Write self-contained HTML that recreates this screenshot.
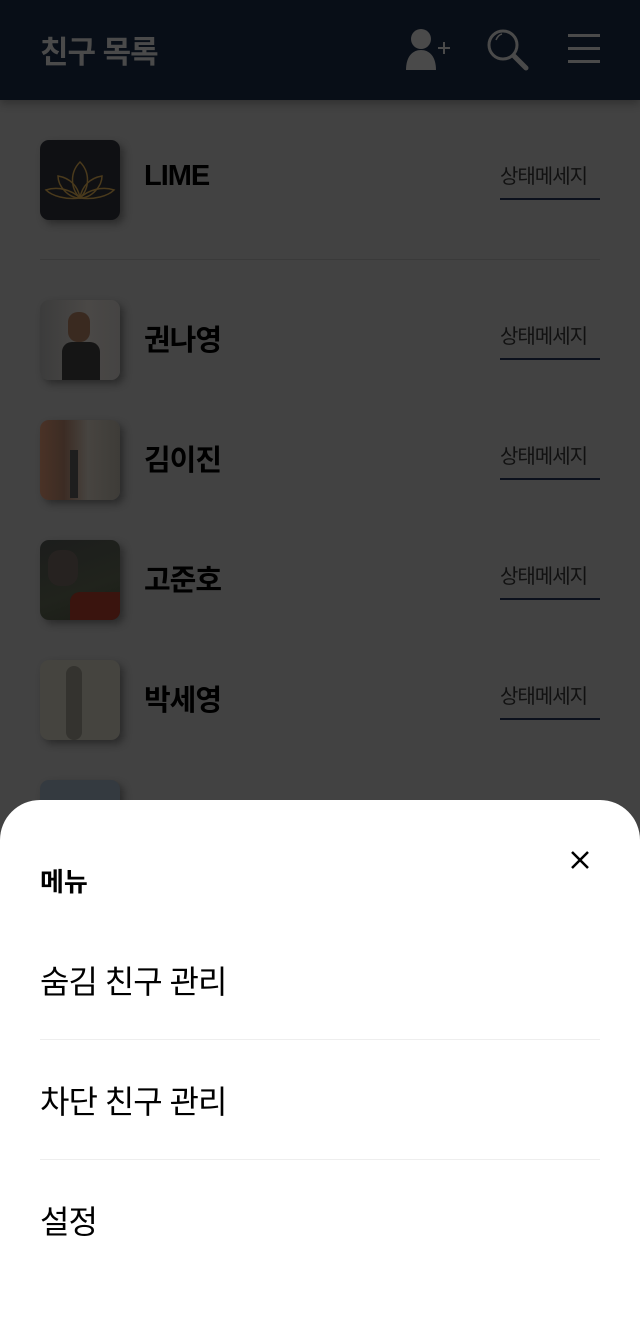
<!DOCTYPE html>
<html><head><meta charset="utf-8"><style>
*{margin:0;padding:0;box-sizing:border-box}
body{width:640px;height:1340px;overflow:hidden;background:#424242;font-family:"Liberation Sans","Noto Sans CJK KR",sans-serif;position:relative}
.hdr{position:absolute;left:0;top:0;width:640px;height:100px;background:#080e17;box-shadow:0 4px 8px rgba(0,0,0,.25)}
.hdr h1{position:absolute;left:40px;top:27px;font-size:31px;font-weight:700;color:#4a4a4a;letter-spacing:-1px}
.row{position:absolute;left:40px;width:560px;height:80px}
.av{position:absolute;left:0;top:0;width:80px;height:80px;border-radius:9px;box-shadow:4px 4px 8px rgba(0,0,0,.35);overflow:hidden}
.nm{position:absolute;left:104px;top:17px;font-size:29px;font-weight:700;color:#000;letter-spacing:-1px}
.st{position:absolute;left:460px;top:20px;font-size:20px;color:#111;letter-spacing:-1px}
.ul{position:absolute;left:460px;top:58px;width:100px;height:2px;background:#0b101c}
.sep{position:absolute;left:40px;top:259px;width:560px;height:1px;background:#3a3a3a}
.sheet{position:absolute;left:0;top:800px;width:640px;height:540px;background:#fff;border-radius:40px 40px 0 0}
.sheet h2{position:absolute;left:40px;top:62px;font-size:26px;font-weight:700;color:#000}
.it{position:absolute;left:40px;font-size:32px;color:#000;letter-spacing:-1px}
.ln{position:absolute;left:40px;width:560px;height:1px;background:#eee}
</style></head><body>
<div class="hdr"><h1>친구 목록</h1>
<svg style="position:absolute;left:406px;top:28px" width="50" height="44" viewBox="0 0 50 44">
<circle cx="15" cy="11" r="10" fill="#4a4a4a"/><path d="M0 42 C0 28 7 22 15 22 C23 22 30 28 30 42Z" fill="#4a4a4a"/>
<path d="M32 20h12M38 14v12" stroke="#4a4a4a" stroke-width="2"/></svg>
<svg style="position:absolute;left:486px;top:28px" width="46" height="44" viewBox="0 0 46 44">
<circle cx="17" cy="17" r="14" fill="none" stroke="#4a4a4a" stroke-width="3"/><path d="M28 28 L40 40" stroke="#4a4a4a" stroke-width="5" stroke-linecap="round"/>
<path d="M10 12 Q12 7 16 6" stroke="#4a4a4a" stroke-width="1.5" fill="none"/></svg>
<div style="position:absolute;left:568px;top:34px;width:32px;height:3px;background:#4a4a4a"></div>
<div style="position:absolute;left:568px;top:47px;width:32px;height:3px;background:#4a4a4a"></div>
<div style="position:absolute;left:568px;top:60px;width:32px;height:3px;background:#4a4a4a"></div>
</div>

<div class="row" style="top:140px"><div class="av" style="background:#0f1013">
<svg width="80" height="80" viewBox="0 0 80 80"><g fill="none" stroke="#4a3a1c" stroke-width="1.5"><path d="M40 22 C50 32 50 48 40 58 C30 48 30 32 40 22Z"/><path d="M40 58 C28 58 18 46 18 36 C30 38 38 46 40 58Z"/><path d="M40 58 C52 58 62 46 62 36 C50 38 42 46 40 58Z"/><path d="M40 58 C26 60 12 56 6 50 C18 46 32 50 40 58Z"/><path d="M40 58 C54 60 68 56 74 50 C62 46 48 50 40 58Z"/></g></svg></div>
<div class="nm" style="top:20px">LIME</div><div class="st">상태메세지</div><div class="ul"></div></div>
<div class="sep"></div>

<div class="row" style="top:300px"><div class="av" style="background:linear-gradient(90deg,#3c3c3c,#4a4846 60%,#454443)"><div style="position:absolute;left:22px;top:42px;width:38px;height:38px;background:#151515;border-radius:10px 10px 0 0"></div><div style="position:absolute;left:28px;top:12px;width:22px;height:30px;background:#3a2a20;border-radius:10px"></div></div>
<div class="nm">권나영</div><div class="st">상태메세지</div><div class="ul"></div></div>

<div class="row" style="top:420px"><div class="av" style="background:linear-gradient(90deg,#4a3226 0,#3c2c24 30%,#474440 60%,#3e3c38)"><div style="position:absolute;left:30px;top:30px;width:8px;height:48px;background:#1e1e1e"></div></div>
<div class="nm">김이진</div><div class="st">상태메세지</div><div class="ul"></div></div>

<div class="row" style="top:540px"><div class="av" style="background:linear-gradient(160deg,#1c1d1c,#20231c 60%,#1a1c16)"><div style="position:absolute;left:30px;top:52px;width:50px;height:28px;background:#3a140e;border-radius:10px 0 0 0"></div><div style="position:absolute;left:8px;top:10px;width:30px;height:36px;background:#262220;border-radius:12px"></div></div>
<div class="nm">고준호</div><div class="st">상태메세지</div><div class="ul"></div></div>

<div class="row" style="top:660px"><div class="av" style="background:#45443f"><div style="position:absolute;left:26px;top:6px;width:16px;height:74px;background:#34332f;border-radius:8px"></div></div>
<div class="nm">박세영</div><div class="st">상태메세지</div><div class="ul"></div></div>

<div class="row" style="top:780px"><div class="av" style="background:#343a40"></div></div>

<div class="sheet">
<h2>메뉴</h2>
<svg style="position:absolute;left:570px;top:50px" width="20" height="20" viewBox="0 0 20 20"><path d="M2 2L18 18M18 2L2 18" stroke="#000" stroke-width="2.5"/></svg>
<div class="it" style="top:157px">숨김 친구 관리</div>
<div class="ln" style="top:239px"></div>
<div class="it" style="top:277px">차단 친구 관리</div>
<div class="ln" style="top:359px"></div>
<div class="it" style="top:397px">설정</div>
</div>
</body></html>
